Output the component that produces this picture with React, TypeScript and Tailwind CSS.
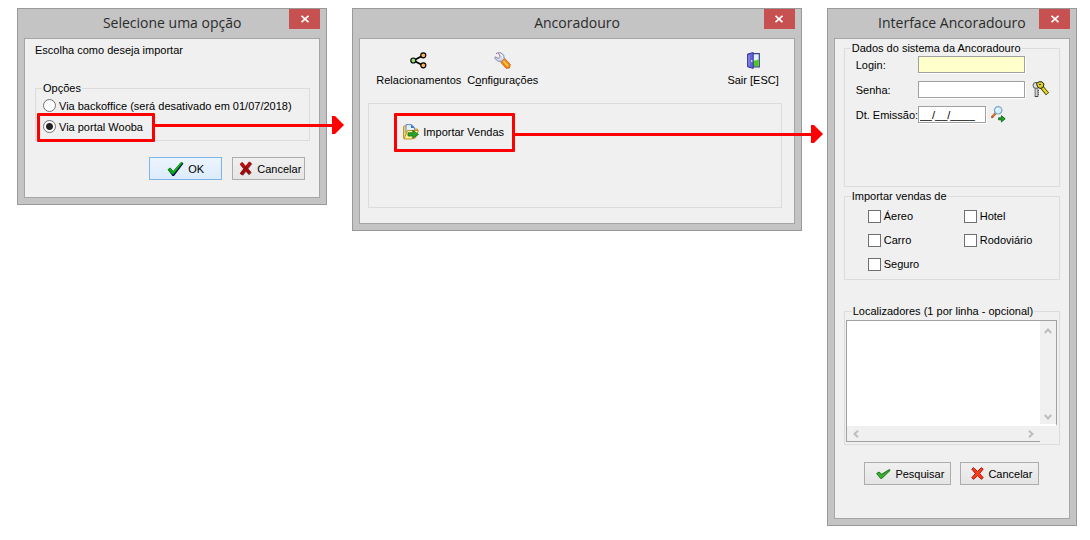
import type { ReactNode } from 'react';

function DialogWindow({ title, children, overlay }: { title: string; children: ReactNode; overlay?: ReactNode }) {
  return (
    <section aria-label={title} className="relative min-w-0 border border-[#999999] bg-[#c4c4c4] px-[6px] pb-[6px]">
      <header className="grid h-[29px] grid-cols-[31px_1fr_31px] items-start">
        <span />
        <h2 className="pt-[4px] text-center font-['Open_Sans','Noto_Sans',sans-serif] text-[14px] leading-[20px] whitespace-nowrap text-[#2b2b2b]">
          {title}
        </h2>
        <button type="button" aria-label="Fechar" className="flex h-[20px] items-center justify-center bg-[#c75050]">
          <svg width="8" height="8" viewBox="0 0 8 8" stroke="#fff" strokeWidth="1.8" fill="none">
            <path d="M0.5 0.8 7.5 7.2M7.5 0.8 0.5 7.2" />
          </svg>
        </button>
      </header>
      <div className="border border-[#a5a5a5] bg-[#f0f0f0]">{children}</div>
      {overlay}
    </section>
  );
}

function Group({ legend, className, children }: { legend: string; className: string; children: ReactNode }) {
  return (
    <fieldset className={`min-w-0 border border-[#dcdcdc] ${className}`}>
      <legend className="ml-[6px] px-px leading-[14px] whitespace-nowrap">{legend}</legend>
      {children}
    </fieldset>
  );
}

function ArrowHead() {
  return (
    <svg width="12" height="18" viewBox="0 0 12 18" className="shrink-0">
      <path d="M0 0H3L12 9 3 18H0Z" fill="#ff0000" />
    </svg>
  );
}

function Radio({ id, label, defaultChecked }: { id: string; label: string; defaultChecked?: boolean }) {
  return (
    <div className="flex h-[21px] items-center gap-[3px] pl-[7px]">
      <input
        type="radio"
        id={id}
        name="origem"
        defaultChecked={defaultChecked}
        className="size-[13px] shrink-0 appearance-none rounded-full border border-[#707070] bg-white checked:bg-[radial-gradient(circle,#222_0_3px,#fff_4px)]"
      />
      <label htmlFor={id} className="whitespace-nowrap">{label}</label>
    </div>
  );
}

function Check({ id, label }: { id: string; label: string }) {
  return (
    <div className="flex h-[24px] items-center gap-[3px]">
      <input
        type="checkbox"
        id={id}
        className="size-[13px] shrink-0 appearance-none border border-[#707070] bg-white checked:bg-[#444]"
      />
      <label htmlFor={id}>{label}</label>
    </div>
  );
}

function GreenCheck() {
  return (
    <svg width="17" height="16" viewBox="0 0 17 16">
      <path d="M1 9 3.5 7 6.5 10.5 14 1.5 16.5 2.5 7 15 5.5 15Z" fill="#00005a" />
      <path d="M0.5 8.5 3 6.5 6 10 14 1 16 1.5 6.5 13.5 5 13.5Z" fill="#0a9a10" />
      <path d="M3 8.5 6 11.5 14.5 2" stroke="#18c020" fill="none" />
    </svg>
  );
}

function DarkCross() {
  return (
    <svg width="14" height="15" viewBox="0 0 14 15">
      <path d="M2.5 3 11.5 13M12 2 3 13.5" stroke="#777" strokeWidth="3.4" fill="none" />
      <path d="M2 2 6.5 7.5 11 12.5M11.5 1.5 7 7 2 13.5" stroke="#a00808" strokeWidth="3.4" fill="none" />
      <path d="M2 2 5.5 6M11 2 8 5.5" stroke="#d01010" strokeWidth="1.2" fill="none" />
    </svg>
  );
}

function SmallCheck() {
  return (
    <svg width="15" height="10" viewBox="0 0 15 10">
      <path d="M0.7 4.5 3 3 5.7 5.3 13.3 0.6 14.2 1.3 5.8 9.4 4.5 9.3Z" fill="#35b52a" stroke="#14701a" strokeWidth="1" />
    </svg>
  );
}

function RedCross() {
  return (
    <svg width="13" height="13" viewBox="0 0 13 13">
      <path
        d="M0.8 2.2 2.4 0.7 6.5 4.4 10.4 0.7 12.2 2 8.6 6.5 12.2 10.6 10.6 12.3 6.5 8.8 2.6 12.3 0.8 10.8 4.4 6.5Z"
        fill="#f8401c"
        stroke="#b81408"
      />
    </svg>
  );
}

function ShareIcon() {
  return (
    <svg width="17" height="17" viewBox="0 0 17 17">
      <path d="M3.5 8.5 13 3.5M3.5 8.5 13 13.5" stroke="#000" strokeWidth="1.8" />
      <circle cx="13.3" cy="3.3" r="2.5" fill="#ffb45a" stroke="#000" strokeWidth="1.2" />
      <circle cx="13.3" cy="13.3" r="2.5" fill="#ffb45a" stroke="#000" strokeWidth="1.2" />
      <circle cx="3.3" cy="8.5" r="2.5" fill="#8fe86a" stroke="#000" strokeWidth="1.2" />
    </svg>
  );
}

function WrenchIcon() {
  return (
    <svg width="17" height="17" viewBox="0 0 17 17">
      <path d="M8 8.5 10.5 6.2 16.3 12.5 15.5 16 12 16.3 7 10.5Z" fill="#f08c14" stroke="#c05a10" strokeWidth="0.8" />
      <path d="M9.5 9 14.2 14.2" stroke="#ffc860" strokeWidth="1.5" />
      <path
        d="M3.5 0.7 6.8 0.8 9.8 3.2 10.2 6.5 7.6 9.4 4 9.2 0.8 6.5 1 4.8 4.2 6.3 6 4.6 5.2 2.6Z"
        fill="#d4d6ea"
        stroke="#8484a4"
        strokeWidth="0.9"
      />
      <path d="M6.5 2 8.5 4.5 8.2 6.5" stroke="#fff" fill="none" />
      <path d="M2 1H3V2H2Z" fill="#ff20f0" />
    </svg>
  );
}

function DoorIcon() {
  return (
    <svg width="13" height="17" viewBox="0 0 13 17">
      <path d="M5.5 1.7H12.3V14.8H5.5Z" fill="#dff4fa" stroke="#3f3f86" strokeWidth="1.2" />
      <path d="M6 9 11.7 7.5V14.2H6Z" fill="#4ec81e" />
      <path d="M0.6 2 6.2 0.6V16.4L0.6 14.8Z" fill="#6464d6" stroke="#3434a0" />
      <path d="M2 3.2V13.8" stroke="#9494f0" />
      <path d="M4.8 8V10" stroke="#fff" />
    </svg>
  );
}

function ImportIcon() {
  return (
    <svg width="16" height="16" viewBox="0 0 16 16">
      <path d="M0.6 14.5V2.6L2 1.6 3.5 2.6V5H14.4V8" fill="#f6d860" stroke="#c0901c" />
      <path d="M3 0.6H8.5L11.5 3.6V9H3Z" fill="#e6f0ff" stroke="#5c8cd0" />
      <path d="M8 0.5 11.5 4H8Z" fill="#3a70c8" />
      <path d="M1 15 4.5 6.5H15.4L12.4 14 8 15Z" fill="#fff0a0" stroke="#c0901c" />
      <path d="M5 8.8H9.8V6.3L15.4 10.4 9.8 14.2V12H5Z" fill="#2aa428" stroke="#11701a" strokeWidth="0.8" />
    </svg>
  );
}

function KeysIcon() {
  return (
    <svg width="17" height="17" viewBox="0 0 17 17">
      <path d="M4.5 5V16" stroke="#444" strokeWidth="3.6" />
      <path d="M4.5 5V15" stroke="#d0d0d0" strokeWidth="2.2" />
      <path d="M6.5 9V14" stroke="#555" strokeDasharray="1 1" />
      <circle cx="4" cy="4.4" r="3" fill="#dedede" stroke="#555" />
      <path d="M8 4 15.5 13" stroke="#3c3800" strokeWidth="4" />
      <path d="M8 4 15.2 12.6" stroke="#e8dc18" strokeWidth="2.4" />
      <path d="M4.5 2.5 7 0.8H10L12 3 11 6.5 8 7.5 5.5 5.5Z" fill="#e0d418" stroke="#222" />
      <path d="M7 3.5H9" stroke="#333" strokeWidth="1.2" />
    </svg>
  );
}

function SearchIcon() {
  return (
    <svg width="15" height="17" viewBox="0 0 15 17">
      <path d="M4.8 7 1.2 11" stroke="#b05a20" strokeWidth="2.4" strokeLinecap="round" />
      <path d="M4.4 7.2 1.6 10.3" stroke="#f09858" />
      <circle cx="7.2" cy="4.3" r="3.7" fill="#d4efff" stroke="#78a4cc" strokeWidth="1.2" />
      <path d="M5.2 3.8 7 2.2" stroke="#fff" strokeWidth="1.2" />
      <path d="M7.6 11.8H10.4V9.6L14.2 12.8 10.4 16V13.8H7.6Z" fill="#1fa028" stroke="#0c5a14" strokeWidth="0.8" />
    </svg>
  );
}

function PushButton({ icon, label, className, primary }: { icon: ReactNode; label: string; className: string; primary?: boolean }) {
  const tone = primary
    ? 'border-[#7eb4ea] bg-linear-to-b from-[#ecf4fc] to-[#dcecfc]'
    : 'border-[#acacac] bg-linear-to-b from-[#f0f0f0] to-[#e5e5e5]';
  return (
    <button type="button" className={`flex h-[23px] items-center gap-[4px] border whitespace-nowrap ${tone} ${className}`}>
      {icon}
      {label}
    </button>
  );
}

function ToolButton({ icon, children }: { icon: ReactNode; children: ReactNode }) {
  return (
    <button type="button" className="flex flex-col items-center gap-[4px] leading-[14px] whitespace-nowrap">
      {icon}
      <span>{children}</span>
    </button>
  );
}

function Chevron({ d }: { d: string }) {
  return (
    <svg width="8" height="8" viewBox="0 0 8 8" fill="none" stroke="#bdbdbd" strokeWidth="2">
      <path d={d} />
    </svg>
  );
}

const fieldClass = 'h-[17px] min-w-0 border border-[#a0a0a0] px-[1px] shadow-[1px_1px_0_#fff] outline-none';

export default function App() {
  return (
    <main className="grid min-h-screen grid-cols-[310fr_449fr_250fr] items-start gap-x-[25px] bg-white pt-[8px] pr-[13px] pb-[14px] pl-[17px] font-['Liberation_Sans',Arial,sans-serif] text-[11px] leading-[14px] text-black">
      <DialogWindow
        title="Selecione uma opção"
        overlay={
          <>
            <div className="pointer-events-none absolute top-[104px] left-[19px] h-[29px] w-[118px] rounded-[1px] border-3 border-[#ff0000]" />
            <div className="pointer-events-none absolute top-[107px] right-[-18px] left-[136px] z-10 flex items-center">
              <div className="h-[3px] grow bg-[#ff0000]" />
              <ArrowHead />
            </div>
          </>
        }
      >
        <p className="pt-[4px] pl-[10px]">Escolha como deseja importar</p>
        <Group legend="Opções" className="mt-[24px] mr-[9px] ml-[10px] pb-[3px]">
          <Radio id="via-backoffice" label="Via backoffice (será desativado em 01/07/2018)" />
          <Radio id="via-portal" label="Via portal Wooba" defaultChecked />
        </Group>
        <div className="flex justify-end gap-[10px] pt-[16px] pr-[14px] pb-[17px]">
          <PushButton primary icon={<GreenCheck />} label="OK" className="w-[73px] pl-[17px]" />
          <PushButton icon={<DarkCross />} label="Cancelar" className="w-[73px] pl-[6px]" />
        </div>
      </DialogWindow>

      <DialogWindow
        title="Ancoradouro"
        overlay={
          <>
            <div className="pointer-events-none absolute top-[104px] left-[41px] h-[39px] w-[121px] rounded-[1px] border-3 border-[#ff0000]" />
            <div className="pointer-events-none absolute top-[116px] right-[-22px] left-[161px] z-10 flex items-center">
              <div className="h-[3px] grow bg-[#ff0000]" />
              <ArrowHead />
            </div>
          </>
        }
      >
        <nav className="flex h-[64px] items-start gap-[6px] pt-[13px] pr-[15px] pl-[16px]">
          <ToolButton icon={<ShareIcon />}>Relacionamentos</ToolButton>
          <ToolButton icon={<WrenchIcon />}>
            C<u>o</u>nfigurações
          </ToolButton>
          <div className="grow" />
          <ToolButton icon={<DoorIcon />}>Sair [ESC]</ToolButton>
        </nav>
        <div className="mr-[12px] mb-[15px] ml-[8px] min-h-[105px] border border-[#dcdcdc] pt-[20px] pl-[34px]">
          <button type="button" className="flex items-center gap-[4px]">
            <ImportIcon />
            Importar Vendas
          </button>
        </div>
      </DialogWindow>

      <DialogWindow title="Interface Ancoradouro">
        <Group legend="Dados do sistema da Ancoradouro" className="mt-[2px] mr-[9px] ml-[9px] pb-[63px]">
          <div className="grid grid-cols-[62px_1fr_27px] items-center gap-y-[8px] pt-px pr-[7px] pl-[11px]">
            <label htmlFor="login">Login:</label>
            <input id="login" type="text" className={`${fieldClass} bg-[#ffffcc]`} />
            <span />
            <label htmlFor="senha">Senha:</label>
            <input id="senha" type="password" className={`${fieldClass} bg-white`} />
            <button type="button" aria-label="Chaves" className="flex h-[17px] items-center justify-end pr-[3px]">
              <KeysIcon />
            </button>
            <label htmlFor="emissao" className="whitespace-nowrap">Dt. Emissão:</label>
            <div className="col-span-2 flex items-center gap-[5px]">
              <input id="emissao" type="text" defaultValue="__/__/____" className={`${fieldClass} w-[68px] bg-white`} />
              <button type="button" aria-label="Buscar data" className="flex h-[17px] items-center">
                <SearchIcon />
              </button>
            </div>
          </div>
        </Group>
        <Group legend="Importar vendas de" className="mt-[2px] mr-[9px] ml-[9px] pb-[3px]">
          <div className="grid grid-cols-[96px_1fr] pt-px pl-[23px]">
            <Check id="aereo" label="Áereo" />
            <Check id="hotel" label="Hotel" />
            <Check id="carro" label="Carro" />
            <Check id="rodoviario" label="Rodoviário" />
            <Check id="seguro" label="Seguro" />
          </div>
        </Group>
        <Group legend="Localizadores (1 por linha - opcional)" className="mt-[24px] mr-[9px] ml-[9px] px-px pb-[2px]">
          <div className="mt-[2px] mr-px grid grid-cols-[1fr_17px] grid-rows-[106px_16px]">
            <textarea
              aria-label="Localizadores"
              className="h-full w-full resize-none border-t border-l border-[#a0a0a0] bg-white outline-none"
            />
            <div className="flex flex-col items-center justify-between border-t border-r border-b-2 border-t-[#a0a0a0] border-r-[#a0a0a0] border-b-white bg-[#f0f0f0] pt-[6px] pb-[3px]">
              <Chevron d="M0.8 6 4 2.5 7.2 6" />
              <Chevron d="M0.8 2 4 5.5 7.2 2" />
            </div>
            <div className="flex items-center justify-between border-b border-l border-[#a0a0a0] bg-[#f0f0f0] px-[5px]">
              <Chevron d="M6 0.8 2.5 4 6 7.2" />
              <Chevron d="M2 0.8 5.5 4 2 7.2" />
            </div>
          </div>
        </Group>
        <div className="flex justify-center gap-[9px] pt-[17px] pb-[33px]">
          <PushButton icon={<SmallCheck />} label="Pesquisar" className="w-[87px] pl-[11px]" />
          <PushButton icon={<RedCross />} label="Cancelar" className="w-[79px] pl-[10px]" />
        </div>
      </DialogWindow>
    </main>
  );
}
